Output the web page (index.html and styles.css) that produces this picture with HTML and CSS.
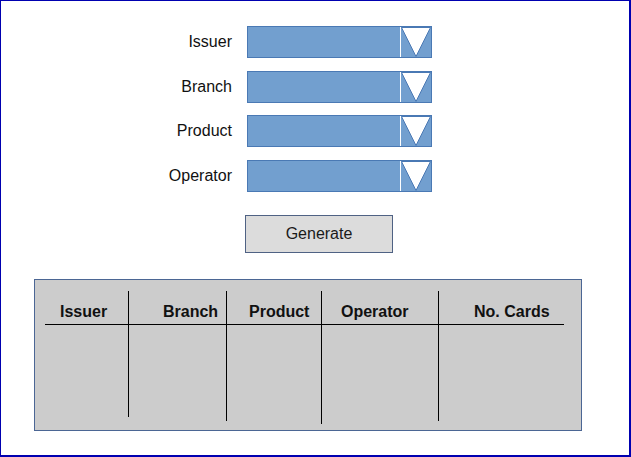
FILE: index.html
```html
<!DOCTYPE html>
<html>
<head>
<meta charset="utf-8">
<link rel="stylesheet" href="styles.css">
</head>
<body>
<div class="frame">
  <div class="form">
    <div class="label">Issuer</div>
    <div class="select"><div class="field"></div><div class="arrow"><svg width="30" height="30" viewBox="0 0 30 30"><polygon points="0.5,0.5 29.5,0.5 15,29.5" fill="#fff" stroke="#4a79b4" stroke-width="1"/></svg></div></div>
    <div class="label">Branch</div>
    <div class="select"><div class="field"></div><div class="arrow"><svg width="30" height="30" viewBox="0 0 30 30"><polygon points="0.5,0.5 29.5,0.5 15,29.5" fill="#fff" stroke="#4a79b4" stroke-width="1"/></svg></div></div>
    <div class="label">Product</div>
    <div class="select"><div class="field"></div><div class="arrow"><svg width="30" height="30" viewBox="0 0 30 30"><polygon points="0.5,0.5 29.5,0.5 15,29.5" fill="#fff" stroke="#4a79b4" stroke-width="1"/></svg></div></div>
    <div class="label">Operator</div>
    <div class="select"><div class="field"></div><div class="arrow"><svg width="30" height="30" viewBox="0 0 30 30"><polygon points="0.5,0.5 29.5,0.5 15,29.5" fill="#fff" stroke="#4a79b4" stroke-width="1"/></svg></div></div>
  </div>
  <div class="button">Generate</div>
  <div class="panel">
    <div class="col c1"><div class="head">Issuer</div></div>
    <div class="col c2"><div class="head">Branch</div></div>
    <div class="col c3"><div class="head">Product</div></div>
    <div class="col c4"><div class="head">Operator</div></div>
    <div class="col c5"><div class="head">No. Cards</div></div>
  </div>
</div>
</body>
</html>
```
FILE: styles.css
```css
html, body {
  margin: 0;
  padding: 0;
  background: #fff;
}
body {
  font-family: "Liberation Sans", Arial, sans-serif;
  font-size: 16px;
  color: #111;
}
.frame {
  width: 631px;
  height: 457px;
  box-sizing: border-box;
  border-style: solid;
  border-color: #0000b0;
  border-width: 1px 2px 2px 1px;
  overflow: hidden;
}
.form {
  display: grid;
  grid-template-columns: 231px 185px;
  column-gap: 15px;
  row-gap: 12.5px;
  margin-top: 25px;
}
.label {
  text-align: right;
  line-height: 32px;
  height: 32px;
}
.select {
  height: 32px;
  box-sizing: border-box;
  border: 1px solid #4a79b4;
  background: #729fcf;
  display: flex;
}
.field {
  flex: 1;
  border-right: 1px solid #fff;
}
.arrow {
  width: 30px;
  height: 30px;
}
.arrow svg {
  display: block;
}
.button {
  margin: 23.5px 0 0 244px;
  width: 148px;
  height: 38px;
  box-sizing: border-box;
  border: 1px solid #4f6284;
  background: #dcdcdc;
  text-align: center;
  line-height: 36px;
  color: #1a1a1a;
}
.panel {
  margin: 26px 0 0 33px;
  width: 548px;
  height: 152px;
  box-sizing: border-box;
  border: 1px solid #4b6694;
  background: #cccccc;
  padding: 11px 0 0 10px;
  display: flex;
  align-items: flex-start;
}
.col {
  box-sizing: border-box;
  border-right: 1px solid #000;
}
.head {
  font-weight: bold;
  line-height: 18px;
  padding-top: 12px;
  padding-bottom: 3px;
  border-bottom: 1px solid #000;
  white-space: nowrap;
}
.c1 { width: 84px; height: 126px; }
.c1 .head { padding-left: 15px; }
.c2 { width: 98px; height: 130px; }
.c2 .head { padding-left: 34px; }
.c3 { width: 95px; height: 133px; }
.c3 .head { padding-left: 22px; }
.c4 { width: 117px; height: 130px; }
.c4 .head { padding-left: 19px; }
.c5 { width: 125px; border-right: none; }
.c5 .head { padding-left: 35px; }
```
